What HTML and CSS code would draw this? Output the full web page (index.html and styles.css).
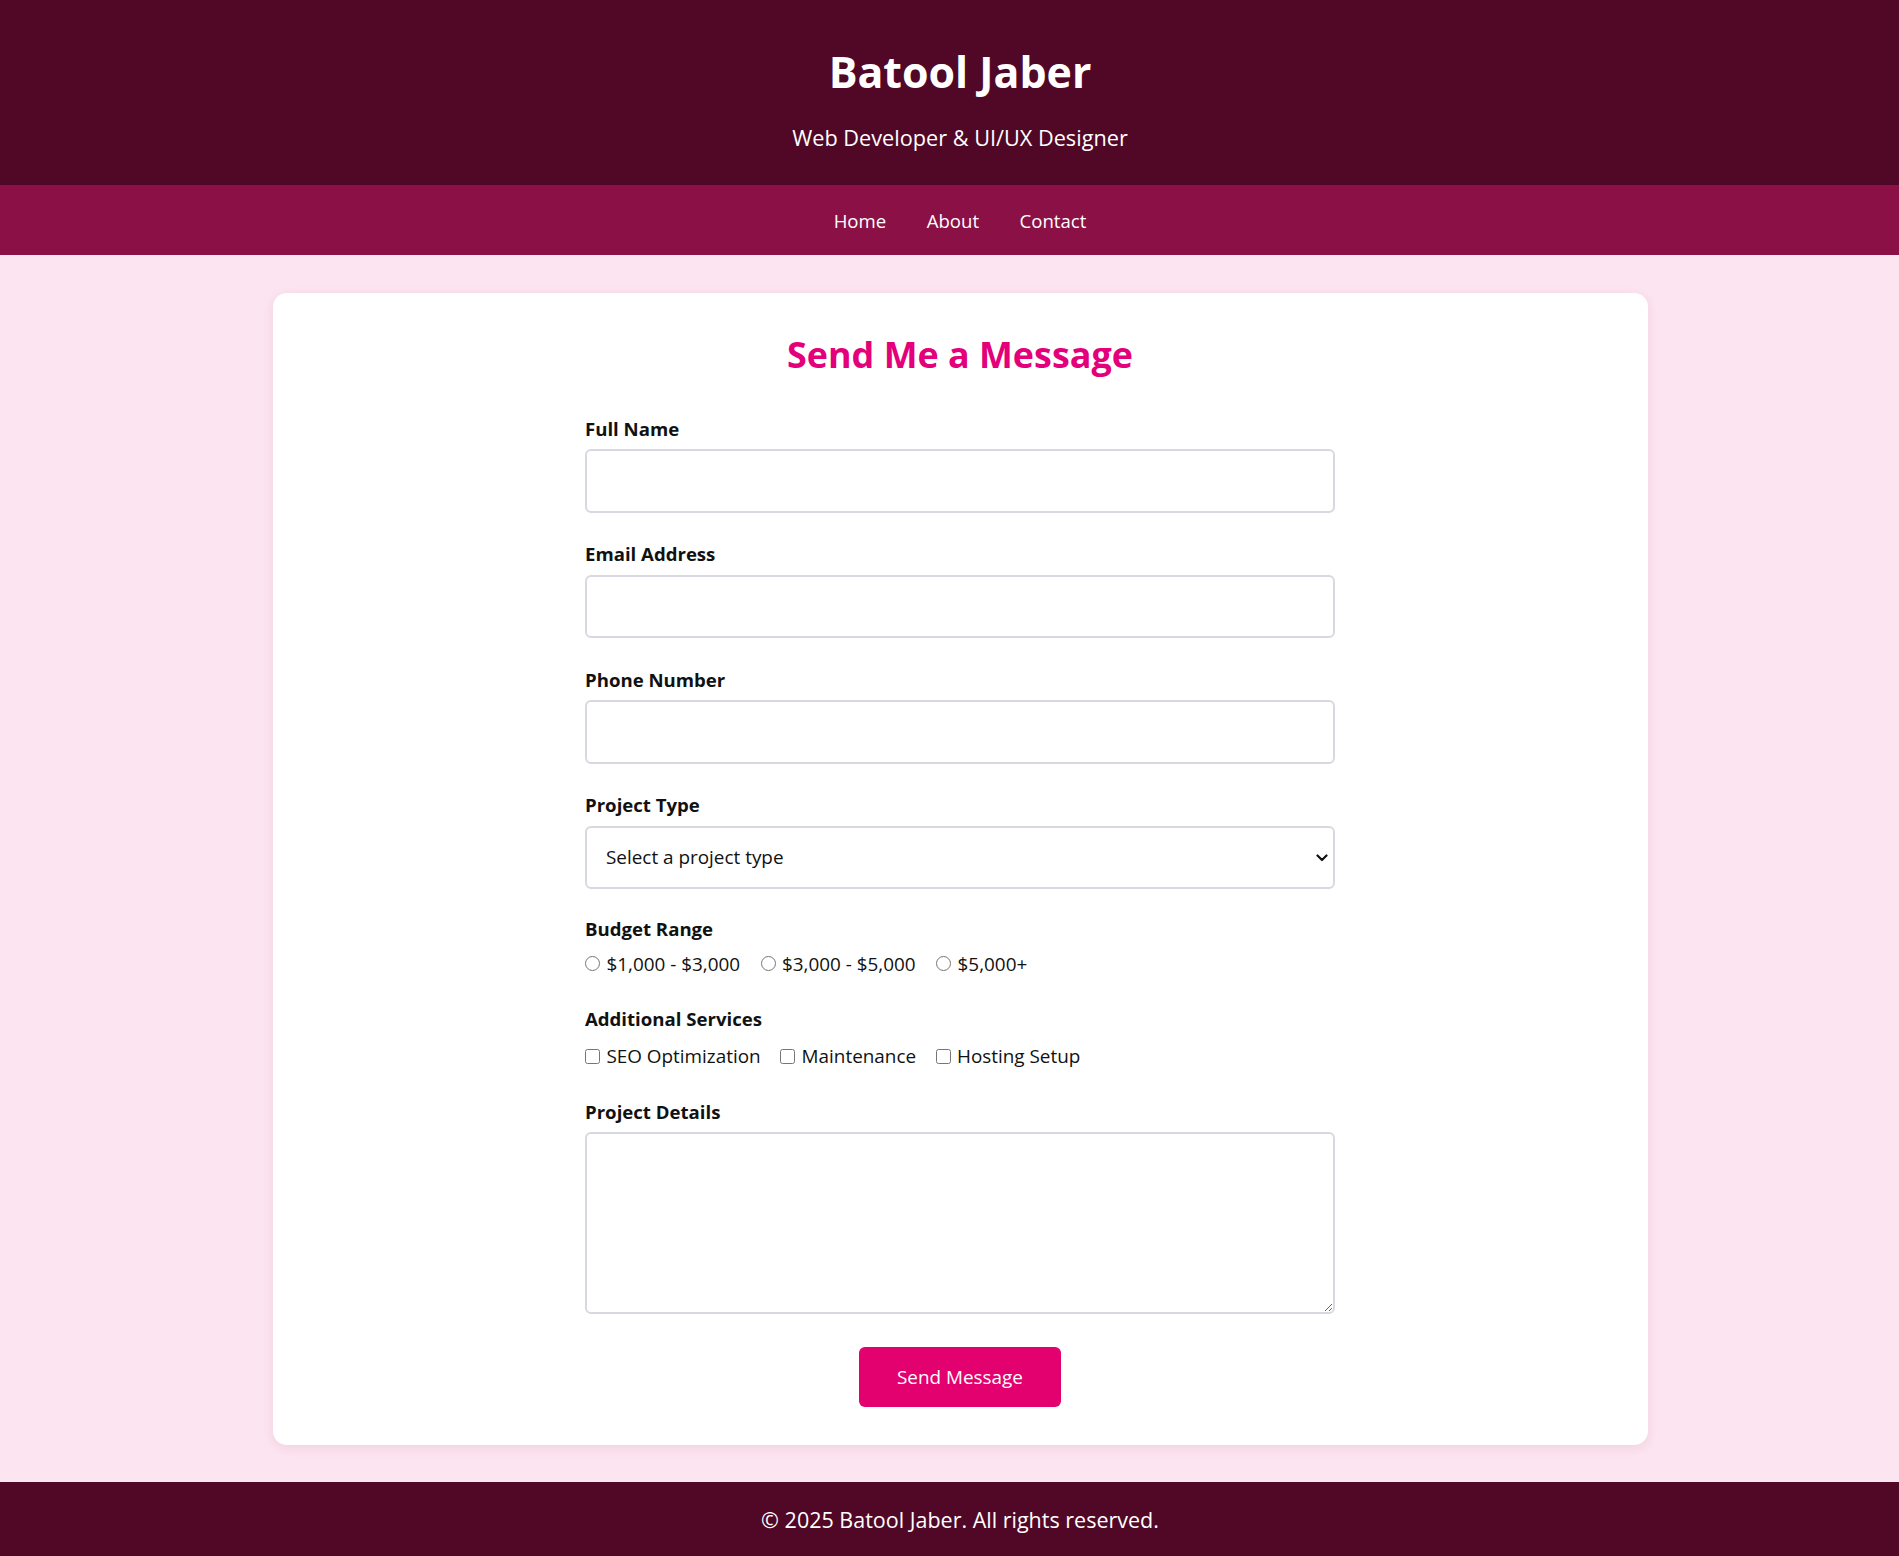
FILE: index.html
```html
<!DOCTYPE html>
<html lang="en">
<head>
<meta charset="utf-8">
<title>Contact - Batool Jaber</title>
<link rel="stylesheet" href="styles.css">
</head>
<body>
<div class="page">
  <header class="site-header">
    <h1 class="site-title">Batool Jaber</h1>
    <p class="site-subtitle">Web Developer &amp; UI/UX Designer</p>
  </header>
  <nav class="site-nav">
    <a class="nav-link" href="#">Home</a>
    <a class="nav-link" href="#">About</a>
    <a class="nav-link" href="#">Contact</a>
  </nav>
  <main class="main">
    <section class="card">
      <h2 class="card-title">Send Me a Message</h2>
      <form class="form">
        <div class="group">
          <label class="field-label" for="name">Full Name</label>
          <input class="field" id="name" type="text">
        </div>
        <div class="group">
          <label class="field-label" for="email">Email Address</label>
          <input class="field" id="email" type="email">
        </div>
        <div class="group">
          <label class="field-label" for="phone">Phone Number</label>
          <input class="field" id="phone" type="tel">
        </div>
        <div class="group group-select">
          <label class="field-label" for="type">Project Type</label>
          <div class="select-wrap">
            <select class="field select" id="type">
              <option>Select a project type</option>
              <option>Website</option>
              <option>Web App</option>
              <option>UI/UX Design</option>
            </select>
            <svg class="chevron" width="12" height="8" viewBox="0 0 12 8" aria-hidden="true"><path d="M1.5 1.5 L6 6 L10.5 1.5" fill="none" stroke="#111" stroke-width="2.2" stroke-linecap="round" stroke-linejoin="round"/></svg>
          </div>
        </div>
        <div class="group">
          <span class="field-label">Budget Range</span>
          <div class="options options-radio">
            <label class="option"><input class="radio" type="radio" name="budget">$1,000 - $3,000</label>
            <label class="option"><input class="radio" type="radio" name="budget">$3,000 - $5,000</label>
            <label class="option"><input class="radio" type="radio" name="budget">$5,000+</label>
          </div>
        </div>
        <div class="group group-checks">
          <span class="field-label">Additional Services</span>
          <div class="options options-check">
            <label class="option"><input class="check" type="checkbox">SEO Optimization</label>
            <label class="option"><input class="check" type="checkbox">Maintenance</label>
            <label class="option"><input class="check" type="checkbox">Hosting Setup</label>
          </div>
        </div>
        <div class="group group-last">
          <label class="field-label" for="details">Project Details</label>
          <textarea class="field textarea" id="details"></textarea>
        </div>
        <button class="submit" type="button">Send Message</button>
      </form>
    </section>
  </main>
  <footer class="site-footer">
    <p class="footer-text">© 2025 Batool Jaber. All rights reserved.</p>
  </footer>
</div>
</body>
</html>
```

FILE: styles.css
```css
html {
  overflow-x: hidden;
}

body {
  margin: 0;
  background: #fce4f0;
  font-family: "Open Sans", "Noto Sans", sans-serif;
  color: #111;
}

.page {
  width: 1920px;
}

.site-header {
  background: #510726;
  color: #fff;
  text-align: center;
  padding: 44px 0 33px;
}

.site-title {
  margin: 0;
  font-size: 42.9px;
  line-height: 56px;
  font-weight: 700;
}

.site-subtitle {
  margin: 24px 0 0;
  font-size: 21.7px;
  line-height: 28px;
}

.site-nav {
  background: #8a1046;
  height: 70px;
  display: flex;
  justify-content: center;
  align-items: center;
  gap: 40.5px;
}

.nav-link {
  color: #fff;
  text-decoration: none;
  font-size: 18.6px;
}

.main {
  padding: 38px 0 37px;
}

.card {
  width: 1375px;
  margin: 0 auto;
  background: #fff;
  border-radius: 14px;
  box-shadow: 0 3px 12px rgba(130, 20, 70, 0.09);
  padding: 39px 0 38px;
  box-sizing: border-box;
}

.card-title {
  margin: 0 0 38px;
  text-align: center;
  color: #e3007a;
  font-size: 35.9px;
  line-height: 46px;
  font-weight: 700;
}

.form {
  width: 750px;
  margin: 0 auto;
}

.group {
  margin-bottom: 28.8px;
}

.group-select {
  margin-bottom: 27px;
}

.group-checks {
  margin-bottom: 28.8px;
}

.group-last {
  margin-bottom: 0;
}

.field-label {
  display: block;
  font-weight: 700;
  font-size: 18.6px;
  line-height: 25.6px;
  margin-bottom: 7.7px;
  color: #111;
}

.field {
  display: block;
  width: 100%;
  height: 63.4px;
  box-sizing: border-box;
  border: 2px solid #d6d9df;
  border-radius: 6px;
  background: #fff;
  font-family: inherit;
  font-size: 18.9px;
  color: #111;
  padding: 0 19px;
  margin: 0;
}

.select-wrap {
  position: relative;
}

.select {
  appearance: none;
  -webkit-appearance: none;
}

.chevron {
  position: absolute;
  right: 7px;
  top: 28px;
  pointer-events: none;
}

.options {
  display: flex;
  align-items: center;
  margin-top: 10.4px;
  height: 25.6px;
}

.options-radio {
  gap: 20.5px;
}

.options-check {
  gap: 19.5px;
  margin-top: 12.4px;
}

.option {
  display: inline-flex;
  align-items: center;
  gap: 6.4px;
  font-size: 18.9px;
  line-height: 25.6px;
}

.radio,
.check {
  width: 15px;
  height: 15px;
  margin: 0;
  position: relative;
  top: -1px;
}

.textarea {
  height: 182px;
  padding: 12px 19px;
}

.submit {
  display: block;
  margin: 33px auto 0;
  width: 202px;
  height: 60px;
  border: none;
  border-radius: 6px;
  background: #e3006f;
  color: #fff;
  font-family: inherit;
  font-size: 18.9px;
  cursor: pointer;
}

.site-footer {
  background: #510726;
  height: 74px;
  display: flex;
  align-items: center;
  justify-content: center;
}

.footer-text {
  margin: 0;
  color: #fff;
  font-size: 21.5px;
}
```
